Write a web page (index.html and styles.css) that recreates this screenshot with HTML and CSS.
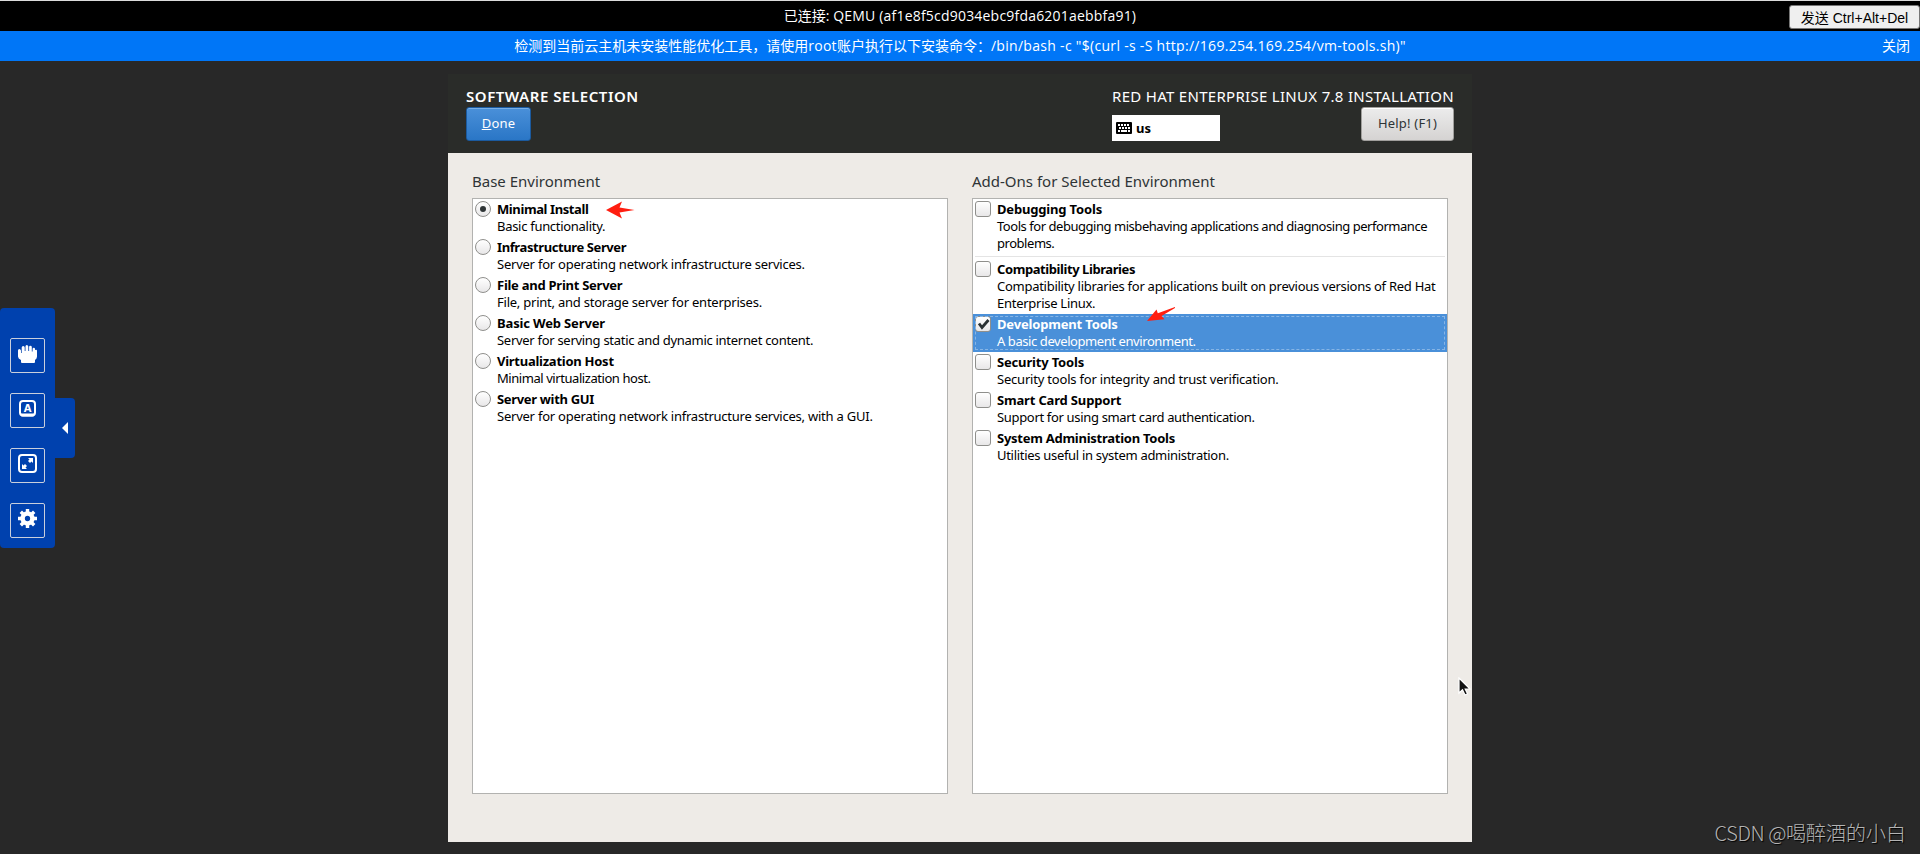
FILE: index.html
```html
<!DOCTYPE html>
<html lang="zh">
<head>
    <meta charset="UTF-8">
    <meta name="viewport" content="width=device-width, initial-scale=1.0">
    <title>QEMU</title>
    <link rel="stylesheet" href="styles.css">
</head>
<body>

    <!-- Connection status -->
    <div class="status-bar">
        <span class="status-text">已连接: <span class="latin">QEMU (af1e8f5cd9034ebc9fda6201aebbfa91)</span></span>
        <button class="send-keys">发送 Ctrl+Alt+Del</button>
    </div>
    <div class="notice-bar">
        <span class="notice-text">检测到当前云主机未安装性能优化工具，请使用<span class="latin">root</span>账户执行以下安装命令：<span class="latin">/bin/bash -c "$(curl -s -S http://169.254.169.254/vm-tools.sh)"</span></span>
        <span class="notice-close">关闭</span>
    </div>

    <!-- Remote screen -->
    <div class="screen">
        <div class="header">
            <div class="header-left">
                <div class="title">SOFTWARE SELECTION</div>
                <button class="btn btn-done"><u>D</u>one</button>
            </div>
            <div class="header-right">
                <div class="product">RED HAT ENTERPRISE LINUX 7.8 INSTALLATION</div>
                <div class="header-tools">
                    <div class="keyboard">
                        <svg width="16" height="12" viewBox="0 0 16 12">
                            <rect width="16" height="12" rx="1" fill="#000"/>
                            <path d="M2 3h12M3 6h11" stroke="#fff" stroke-width="2" stroke-dasharray="2 1"/>
                            <path d="M2 9h2M5 9h6M12 9h2" stroke="#fff" stroke-width="2"/>
                        </svg>
                        <span>us</span>
                    </div>
                    <button class="btn btn-help">Help! (F1)</button>
                </div>
            </div>
        </div>

        <div class="content">
            <div class="column">
                <div class="column-title">Base Environment</div>
                <div class="list base">
                    <div class="row"><span class="radio checked"></span><div class="row-text"><b>Minimal Install</b><p>Basic functionality.</p></div></div>
                    <div class="row"><span class="radio"></span><div class="row-text"><b>Infrastructure Server</b><p>Server for operating network infrastructure services.</p></div></div>
                    <div class="row"><span class="radio"></span><div class="row-text"><b>File and Print Server</b><p>File, print, and storage server for enterprises.</p></div></div>
                    <div class="row"><span class="radio"></span><div class="row-text"><b>Basic Web Server</b><p>Server for serving static and dynamic internet content.</p></div></div>
                    <div class="row"><span class="radio"></span><div class="row-text"><b>Virtualization Host</b><p>Minimal virtualization host.</p></div></div>
                    <div class="row"><span class="radio"></span><div class="row-text"><b>Server with GUI</b><p>Server for operating network infrastructure services, with a GUI.</p></div></div>
                </div>
            </div>
            <div class="column">
                <div class="column-title">Add-Ons for Selected Environment</div>
                <div class="list addons">
                    <div class="row debugging"><span class="check"></span><div class="row-text"><b>Debugging Tools</b><p>Tools for debugging misbehaving applications and diagnosing performance<br>problems.</p></div></div>
                    <div class="separator"></div>
                    <div class="row compat"><span class="check"></span><div class="row-text"><b>Compatibility Libraries</b><p>Compatibility libraries for applications built on previous versions of Red Hat<br>Enterprise Linux.</p></div></div>
                    <div class="row selected">
                        <span class="check">
                            <svg width="14" height="14" viewBox="0 0 14 14"><path d="M3 6.500l3 4L12.500 3" fill="none" stroke="#2a3133" stroke-width="2.800"/></svg>
                        </span>
                        <div class="row-text"><b>Development Tools</b><p>A basic development environment.</p></div>
                    </div>
                    <div class="row security"><span class="check"></span><div class="row-text"><b>Security Tools</b><p>Security tools for integrity and trust verification.</p></div></div>
                    <div class="row smartcard"><span class="check"></span><div class="row-text"><b>Smart Card Support</b><p>Support for using smart card authentication.</p></div></div>
                    <div class="row"><span class="check"></span><div class="row-text"><b>System Administration Tools</b><p>Utilities useful in system administration.</p></div></div>
                </div>
            </div>
        </div>
    </div>

    <!-- Console toolbar -->
    <div class="toolbar">
        <div class="tools">
            <button class="tool">
                <svg width="19" height="18" viewBox="0 0 19 18" fill="#fff"><path d="M0 5.500Q0 4 1.300 4T3 5.500V8h.7V2.500Q3.700 1 5.200 1t1.500 1.500V6h.8V1.500Q7.500 0 8.800 0t1.500 1.500V6h.8V2q0-1.300 1.300-1.300T13.800 2v4.500h.8V4q0-1.300 1.200-1.300T17 4v1q2-.8 2 .7v5.800q0 2-2 3.500V17q0 1-1 1H4q-1 0-1-1v-2Q0 13.500 0 11.500z"/></svg>
            </button>
            <button class="tool">
                <svg width="17" height="17" viewBox="0 0 17 17"><rect x="1" y="1" width="15" height="14.500" rx="3" fill="none" stroke="#fff" stroke-width="2"/><path d="M1.500 13.500h14l-1 3h-12z" fill="#fff"/><text x="8.500" y="11.500" text-anchor="middle" class="key-letter">A</text></svg>
            </button>
            <button class="tool">
                <svg width="19" height="19" viewBox="0 0 19 19"><rect x="1" y="1" width="17" height="17" rx="3" fill="none" stroke="#fff" stroke-width="2"/><path d="M10 4h5v5l-1.500-1.500L12 9l-2-2 1.500-1.500zM4 10l1.500 1.500L7 10l2 2-1.500 1.500L9 15H4z" fill="#fff"/></svg>
            </button>
            <button class="tool">
                <svg width="19" height="19" viewBox="0 0 19 19"><circle cx="9.500" cy="9.500" r="4.900" fill="none" stroke="#fff" stroke-width="4.500"/><path d="M9.500 0v4M9.500 15v4M0 9.500h4M15 9.500h4M2.800 2.800l2.500 2.500M13.700 13.700l2.500 2.500M2.800 16.200l2.500-2.500M13.700 5.300l2.500-2.500" stroke="#fff" stroke-width="3.400"/></svg>
            </button>
        </div>
        <div class="handle"><svg width="6" height="12" viewBox="0 0 6 12"><path d="M6 0v12L0 6z" fill="#fff"/></svg></div>
    </div>

    <!-- Arrows and pointer over the screen -->
    <svg class="arrow arrow-install" width="29" height="18" viewBox="0 0 29 18"><path d="M0 9L16 .5 13.500 6.500 28.500 9l-15 2.500L16 17.500z" fill="#ff1e10"/></svg>
    <svg class="arrow arrow-tools" width="29" height="15" viewBox="0 0 29 15"><path d="M0 14L9.500 2.500l1.300 3.700L28 0v1L14.500 9l3 3.300z" fill="#ff1e10"/></svg>
    <svg class="pointer" width="14" height="20" viewBox="0 0 14 20"><path d="M1 1v15l3.500-3.300L7 18l2.500-1.200L7.200 12H12z" fill="#111" stroke="#fff" stroke-width="1.200"/></svg>

    <div class="watermark"><span>CSDN @</span>喝醉酒的小白</div>

</body>
</html>
```

FILE: styles.css
```css
* {
    box-sizing: border-box;
}
body {
    margin: 0;
    height: 854px;
    overflow: hidden;
    background-color: #282828;
    font-family: "Noto Sans", "Noto Sans CJK SC", sans-serif;
}
button {
    margin: 0;
    padding: 0;
}
p {
    margin: 0;
}
.status-bar, .notice-bar {
    display: grid;
    grid-template-columns: 1fr auto 1fr;
    align-items: center;
    color: white;
    font-family: "Open Sans", "Noto Sans CJK SC", sans-serif;
    font-size: 14px;
    white-space: nowrap;
}
.status-bar {
    height: 31px;
    border-top: 1px solid #dcdcdc;
    background-color: black;
}
.notice-bar {
    height: 30px;
    background-color: #0076f7;
}
.status-text, .notice-text, .notice-close {
    padding-bottom: 2px;
}
.status-text, .notice-text {
    grid-column: 2;
}
.status-text .latin {
    letter-spacing: 0.2px;
}
.notice-text .latin {
    letter-spacing: 0.3px;
}
.send-keys {
    justify-self: end;
    width: 131px;
    height: 24px;
    margin-top: 2px;
    padding-bottom: 1px;
    border: 1px solid #767676;
    border-radius: 3px;
    background-color: #efefef;
    color: black;
    font-family: "Liberation Sans", "Noto Sans CJK SC", sans-serif;
    font-size: 14px;
}
.notice-close {
    justify-self: end;
    padding-right: 10px;
}

.screen {
    width: 1024px;
    height: 768px;
    margin: 13px auto 0;
    display: flex;
    flex-direction: column;
    background-color: #eeebe7;
}
.header {
    height: 79px;
    padding: 13px 18px 0;
    display: flex;
    justify-content: space-between;
    background-color: #2a2c29;
    color: white;
}
.title, .product {
    height: 20px;
    line-height: 19px;
    font-size: 15px;
    white-space: nowrap;
}
.title {
    font-weight: 600;
    letter-spacing: 0.55px;
}
.product {
    letter-spacing: 0.3px;
}
.header-right {
    width: 342px;
}
.header-tools {
    display: flex;
    justify-content: space-between;
    align-items: flex-end;
}
.keyboard {
    width: 108px;
    height: 26px;
    padding-left: 4px;
    display: flex;
    align-items: center;
    gap: 4px;
    background-color: white;
    color: black;
    font-size: 13px;
    font-weight: bold;
    line-height: 18px;
}
.keyboard span {
    padding-bottom: 1px;
}
.btn {
    display: block;
    height: 34px;
    padding-bottom: 2px;
    border-radius: 3px;
    font-family: inherit;
    font-size: 13px;
    letter-spacing: 0.2px;
}
.btn-done {
    width: 65px;
    border: 1px solid #1b5a9e;
    background: linear-gradient(#4a90d9, #2a76c6);
    box-shadow: inset 0 1px #78aee6;
    color: white;
}
.btn-help {
    width: 93px;
    border: 1px solid #a09f9c;
    background: linear-gradient(#ececec, #d5d3d2);
    box-shadow: inset 0 1px #fff;
    color: #2e3436;
}

.content {
    padding: 16px 24px 0;
    display: flex;
    gap: 24px;
}
.column {
    width: 476px;
}
.column-title {
    height: 29px;
    line-height: 25px;
    color: #2e3436;
    font-size: 15px;
}
.list {
    height: 596px;
    border: 1px solid #b2b2b0;
    background-color: white;
}
.row {
    display: flex;
    gap: 6px;
    padding: 2px 2px;
    font-size: 13px;
    line-height: 17px;
    white-space: nowrap;
}
.row b {
    display: block;
    letter-spacing: -0.26px;
}
.row p {
    letter-spacing: -0.3px;
}
.base .row:nth-child(-n+2) b {
    letter-spacing: -0.4px;
}
.base .row:nth-child(4) b {
    letter-spacing: -0.15px;
}
.base .row:nth-child(6) b {
    letter-spacing: -0.33px;
}
.base .row p {
    letter-spacing: -0.23px;
}
.base .row:nth-child(1) p, .base .row:nth-child(4) p {
    letter-spacing: -0.29px;
}
.base .row:nth-child(5) p {
    letter-spacing: -0.44px;
}
.debugging b, .selected b, .security b, .smartcard b {
    letter-spacing: -0.17px;
}
.debugging p {
    letter-spacing: -0.46px;
}
.compat b {
    letter-spacing: -0.42px;
}
.compat p {
    letter-spacing: -0.27px;
}
.selected p {
    letter-spacing: -0.42px;
}
.security p {
    letter-spacing: -0.2px;
}
.smartcard p {
    letter-spacing: -0.33px;
}
.radio, .check {
    flex: none;
    width: 16px;
    height: 16px;
    border: 1px solid #8f8f8c;
    background: linear-gradient(#fff, #e8e7e8);
}
.radio {
    border-radius: 50%;
}
.radio.checked {
    display: flex;
    align-items: center;
    justify-content: center;
}
.radio.checked::before {
    content: "";
    width: 6px;
    height: 6px;
    border-radius: 50%;
    background-color: #2e3436;
}
.check {
    border-radius: 3px;
}
.check svg {
    display: block;
}
.separator {
    height: 5px;
    margin: 0 2px;
    background: linear-gradient(#e4e4e4, #e4e4e4) 0 2px / 100% 1px no-repeat;
}
.row.selected {
    background-color: #4a90d9;
    color: white;
    outline: 1px dashed #86b5e6;
    outline-offset: -3px;
}

.toolbar {
    position: absolute;
    left: 0;
    top: 308px;
    display: flex;
    align-items: center;
}
.tools {
    width: 55px;
    height: 240px;
    padding: 30px 10px 10px;
    display: flex;
    flex-direction: column;
    gap: 20px;
    border-radius: 4px;
    background-color: #0041ae;
}
.tool {
    width: 35px;
    height: 35px;
    padding-bottom: 4px;
    display: flex;
    align-items: center;
    justify-content: center;
    border: 1px solid #c9cfdc;
    border-radius: 2px;
    background: none;
}
.key-letter {
    fill: white;
    font-family: "DejaVu Sans", sans-serif;
    font-size: 10px;
    font-weight: bold;
}
.handle {
    width: 20px;
    height: 60px;
    padding-left: 7px;
    display: flex;
    align-items: center;
    border-radius: 0 4px 4px 0;
    background-color: #0041ae;
}

.arrow, .pointer {
    position: absolute;
}
.arrow-install {
    left: 606px;
    top: 201px;
}
.arrow-tools {
    left: 1147px;
    top: 307px;
}
.pointer {
    left: 1458px;
    top: 677px;
}
.watermark {
    position: absolute;
    right: 14px;
    top: 819px;
    color: #b4b4b4;
    font-family: "Noto Sans CJK SC", sans-serif;
    font-size: 20px;
    font-weight: 300;
    line-height: 28px;
    text-shadow: 1px 1px 1px #000;
    white-space: nowrap;
}
.watermark span {
    letter-spacing: -0.4px;
}
```
